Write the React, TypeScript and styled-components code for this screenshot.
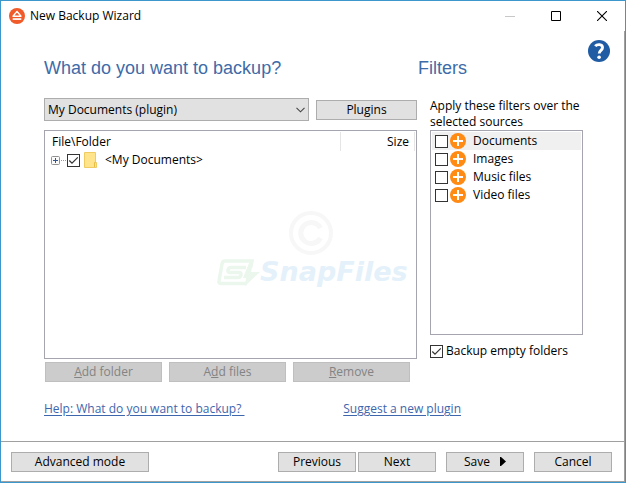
import React from "react";
import styled, { createGlobalStyle } from "styled-components";

const GlobalStyle = createGlobalStyle`
  *, *::before, *::after { box-sizing: border-box; }
  body {
    margin: 0;
    background: #fff;
    color: #000;
    font: 12px/16px "Open Sans", "Noto Sans", sans-serif;
  }
  button, select, input { font: inherit; color: inherit; margin: 0; }
`;

const Window = styled.div`
  display: flex;
  flex-direction: column;
  min-height: 100vh;
  border: 1px solid #3c97cd;
`;

const TitleBar = styled.header`
  display: flex;
  align-items: center;
  height: 30px;
  padding-left: 8px;
`;

const Title = styled.h1`
  flex: 1;
  margin: 0 0 0 5px;
  font-size: 12px;
  font-weight: 400;
`;

const CaptionButton = styled.button`
  display: grid;
  place-items: center;
  width: 46px;
  height: 28px;
  padding: 0;
  border: 0;
  background: none;
`;

const Client = styled.div`
  flex: 1;
  display: flex;
  flex-direction: column;
  border-right: 1px solid #a0a0a0;
  border-bottom: 1px solid #a0a0a0;
`;

const Content = styled.main`
  flex: 1;
  display: grid;
  grid-template-columns: minmax(0, 1fr) 165px 41px;
  grid-template-rows: 67px minmax(0, 1fr);
  padding-left: 43px;
`;

const Heading = styled.h2`
  margin: 0;
  padding-top: 26px;
  color: #3e6ba8;
  font: 400 18px/22px "Liberation Sans", Arial, sans-serif;
`;

const HelpButton = styled.button`
  align-self: start;
  width: 22px;
  height: 22px;
  margin: 9px 0 0 5px;
  padding: 0;
  border: 0;
  background: none;
  svg { display: block; }
`;

const Sources = styled.section`
  display: flex;
  flex-direction: column;
  padding-right: 1px;
`;

const SourceBar = styled.div`
  display: flex;
  align-items: center;
  gap: 7px;
`;

const SelectBox = styled.div`
  flex: 1;
  display: grid;
  align-items: center;
  > * { grid-area: 1 / 1; }
  > svg { justify-self: end; margin-right: 4px; pointer-events: none; }
`;

const Select = styled.select`
  appearance: none;
  width: 100%;
  height: 23px;
  padding: 0 20px 0 3px;
  border: 1px solid #adadad;
  border-radius: 0;
  background: #e1e1e1;
`;

const Button = styled.button<{ $width: number }>`
  display: flex;
  align-items: center;
  justify-content: center;
  gap: 10px;
  width: ${(p) => p.$width}px;
  height: 20px;
  padding: 0;
  border: 1px solid #adadad;
  background: #e1e1e1;
  &:disabled {
    border-color: #bfbfbf;
    background: #ccc;
    color: #838383;
  }
`;

const TreeFrame = styled.div`
  position: relative;
  flex: 1;
  min-height: 229px;
  margin-top: 9px;
  padding: 1px;
  border: 1px solid #a5a5af;
`;

const Tree = styled.table`
  width: 100%;
  border-collapse: collapse;
  th {
    height: 19px;
    padding: 1px 5px 1px 6px;
    border-right: 1px solid #e5e5e5;
    font-weight: 400;
    text-align: left;
  }
  th:last-child { width: 74px; text-align: right; }
  td { height: 18px; padding: 0 0 0 5px; }
`;

const TreeRow = styled.div`
  display: flex;
  align-items: center;
`;

const Expander = styled.button`
  width: 15px;
  height: 9px;
  margin-right: 1px;
  padding: 0;
  border: 0;
  background: none;
  svg { display: block; }
`;

const TreeLabel = styled.label`
  display: flex;
  align-items: center;
  svg { margin: 0 8px 0 4px; }
`;

const Watermark = styled.div`
  position: absolute;
  top: 80px;
  right: 5px;
  width: 194px;
  color: #e4f1fa;
  pointer-events: none;
`;

const Copyright = styled.svg`
  display: block;
  margin: 0 auto 0 72px;
`;

const Brand = styled.div`
  display: flex;
  align-items: center;
  font: italic 700 27px/34px "DejaVu Sans", Verdana, sans-serif;
  svg { flex: none; }
`;

const Actions = styled.div`
  display: flex;
  gap: 7px;
  padding: 3px 0 0 1px;
`;

const Links = styled.nav`
  display: flex;
  justify-content: space-between;
  padding: 19px 0 24px;
  margin-right: -44px;
`;

const Link = styled.a`
  color: #3e66ad;
  white-space: pre;
  text-underline-offset: 2px;
`;

const Filters = styled.section`
  display: flex;
  flex-direction: column;
  padding-left: 12px;
`;

const Hint = styled.p`
  margin: 0;
  line-height: 16px;
  white-space: nowrap;
`;

const FilterList = styled.ul`
  height: 205px;
  margin: 0 0 8px;
  padding: 1px;
  border: 1px solid #a5a5af;
  list-style: none;
`;

const FilterRow = styled.label<{ $current: boolean }>`
  display: flex;
  align-items: center;
  height: 18px;
  padding-left: 3px;
  background: ${(p) => (p.$current ? "#f0f0f0" : "transparent")};
  svg { margin: 0 7px 0 2px; }
`;

const OptionLabel = styled.label`
  display: flex;
  align-items: center;
  gap: 3px;
  white-space: nowrap;
`;

const CheckCell = styled.span`
  display: grid;
  flex: none;
  width: 13px;
  height: 13px;
  > * { grid-area: 1 / 1; }
  && > svg { margin: 0; pointer-events: none; }
`;

const CheckInput = styled.input`
  appearance: none;
  width: 13px;
  height: 13px;
  border: 1px solid #333;
  background: #fff;
  & + svg { visibility: hidden; }
  &:checked + svg { visibility: visible; }
`;

const Footer = styled.footer`
  display: flex;
  align-items: center;
  height: 40px;
  padding: 0 12px 0 10px;
  border-top: 1px solid #a0a0a0;
`;

const Navigation = styled.div`
  display: flex;
  gap: 2px;
  margin: 0 10px 0 auto;
`;

const Finish = styled.div`
  display: flex;
  gap: 10px;
`;

function Check({ checked = false }: { checked?: boolean }) {
  return (
    <CheckCell>
      <CheckInput type="checkbox" defaultChecked={checked} />
      <svg width="13" height="13" viewBox="0 0 13 13" fill="none" stroke="#333" strokeWidth="1.2">
        <path d="M2.3 6.5 5 9.2 10.8 3.3" />
      </svg>
    </CheckCell>
  );
}

const filters = ["Documents", "Images", "Music files", "Video files"];

export default function App() {
  return (
    <>
      <GlobalStyle />
      <Window>
        <TitleBar>
          <svg width="16" height="16" viewBox="0 0 16 16">
            <circle cx="8" cy="8" r="8" fill="#f15a29" />
            <path d="M8 3.4 12 8.3H4z" fill="#f15a29" stroke="#fff" strokeWidth="1.4" strokeLinejoin="round" />
            <rect x="3.7" y="10.2" width="8.6" height="1.7" fill="#fff" />
          </svg>
          <Title>New Backup Wizard</Title>
          <CaptionButton aria-label="Minimize">
            <svg width="10" height="10"><path d="M0 5.5h10" stroke="#c8c8c8" /></svg>
          </CaptionButton>
          <CaptionButton aria-label="Maximize">
            <svg width="10" height="10"><path d="M.5.5h9v9h-9z" fill="none" stroke="#000" /></svg>
          </CaptionButton>
          <CaptionButton aria-label="Close">
            <svg width="10" height="10"><path d="m0 0 10 10M10 0 0 10" stroke="#000" strokeWidth="1.1" /></svg>
          </CaptionButton>
        </TitleBar>
        <Client>
          <Content>
            <Heading>What do you want to backup?</Heading>
            <Heading>Filters</Heading>
            <HelpButton aria-label="Help">
              <svg width="22" height="22" viewBox="0 0 22 22">
                <circle cx="11" cy="11" r="11" fill="#205ca4" />
                <path d="M7.2 6.2C9 4 14.6 3.7 14.5 7.6c-.1 2.8-3.3 2.7-3.3 6" fill="none" stroke="#fff" strokeWidth="2.9" />
                <circle cx="11.1" cy="17.3" r="1.8" fill="#fff" />
              </svg>
            </HelpButton>
            <Sources>
              <SourceBar>
                <SelectBox>
                  <Select aria-label="Backup source">
                    <option>My Documents (plugin)</option>
                  </Select>
                  <svg width="9" height="6" viewBox="0 0 9 6" fill="none" stroke="#444" strokeWidth="1.1">
                    <path d="m.5.8 4 4 4-4" />
                  </svg>
                </SelectBox>
                <Button $width={101}>Plugins</Button>
              </SourceBar>
              <TreeFrame>
                <Tree>
                  <thead>
                    <tr>
                      <th scope="col">File\Folder</th>
                      <th scope="col">Size</th>
                    </tr>
                  </thead>
                  <tbody>
                    <tr>
                      <td colSpan={2}>
                        <TreeRow>
                          <Expander aria-label="Expand">
                            <svg width="15" height="9" viewBox="0 0 15 9" fill="none">
                              <rect x=".5" y=".5" width="8" height="8" rx="1" fill="#fafafa" stroke="#919191" />
                              <path d="M2 4.5h5M4.5 2v5" stroke="#34558f" />
                              <path d="M10 4.5h5" stroke="#999" strokeDasharray="1 1" />
                            </svg>
                          </Expander>
                          <TreeLabel>
                            <Check checked />
                            <svg width="13" height="16" viewBox="0 0 13 16">
                              <path d="M.5.5h11v10h1v5H.5z" fill="#ffe48b" stroke="#efcb62" />
                              <path d="M10.5 15v-4.5h1" fill="none" stroke="#e8bd44" />
                            </svg>
                            &lt;My Documents&gt;
                          </TreeLabel>
                        </TreeRow>
                      </td>
                    </tr>
                  </tbody>
                </Tree>
                <Watermark>
                  <Copyright width="44" height="44" viewBox="0 0 44 44" fill="none" stroke="#f7f7f7">
                    <circle cx="22" cy="22" r="20" strokeWidth="4" />
                    <path d="M31.5 17a10.5 10.5 0 1 0 0 10" strokeWidth="5" />
                  </Copyright>
                  <Brand>
                    <svg width="43" height="27" viewBox="0 0 43 27" fill="none" stroke="#ebf7ed">
                      <path d="M30 24.5H4Q1.500 24.5 2 22L5 5Q5.500 2 8 2H35L33.500 9" strokeWidth="3.500" />
                      <path d="M29 8.500H14Q11.500 8.500 11 11T13 13.500H22Q24.500 13.500 24 16T21 18.500H7" strokeWidth="3.500" />
                      <path d="M32 4h4l-2 9h9L28 27l1-8h-3z" fill="#ebf7ed" stroke="none" />
                    </svg>
                    SnapFiles
                  </Brand>
                </Watermark>
              </TreeFrame>
              <Actions>
                <Button $width={117} disabled><span><u>A</u>dd folder</span></Button>
                <Button $width={117} disabled><span>A<u>d</u>d files</span></Button>
                <Button $width={117} disabled><span><u>R</u>emove</span></Button>
              </Actions>
              <Links>
                <Link href="#help">{"Help: What do you want to backup? "}</Link>
                <Link href="#suggest">Suggest a new plugin</Link>
              </Links>
            </Sources>
            <Filters>
              <Hint>Apply these filters over the<br />selected sources</Hint>
              <FilterList>
                {filters.map((name, i) => (
                  <li key={name}>
                    <FilterRow $current={i === 0}>
                      <Check />
                      <svg width="16" height="16" viewBox="0 0 16 16">
                        <circle cx="8" cy="8" r="8" fill="#ff8a14" />
                        <path d="M8 3v10M3 8h10" stroke="#fff" strokeWidth="2" />
                      </svg>
                      {name}
                    </FilterRow>
                  </li>
                ))}
              </FilterList>
              <OptionLabel>
                <Check checked />
                Backup empty folders
              </OptionLabel>
            </Filters>
          </Content>
          <Footer>
            <Button $width={138}>Advanced mode</Button>
            <Navigation>
              <Button $width={78}>Previous</Button>
              <Button $width={78}>Next</Button>
            </Navigation>
            <Finish>
              <Button $width={78}>
                Save
                <svg width="6" height="9" viewBox="0 0 6 9"><path d="M0 0h1l5 4.5L1 9H0z" /></svg>
              </Button>
              <Button $width={78}>Cancel</Button>
            </Finish>
          </Footer>
        </Client>
      </Window>
    </>
  );
}
